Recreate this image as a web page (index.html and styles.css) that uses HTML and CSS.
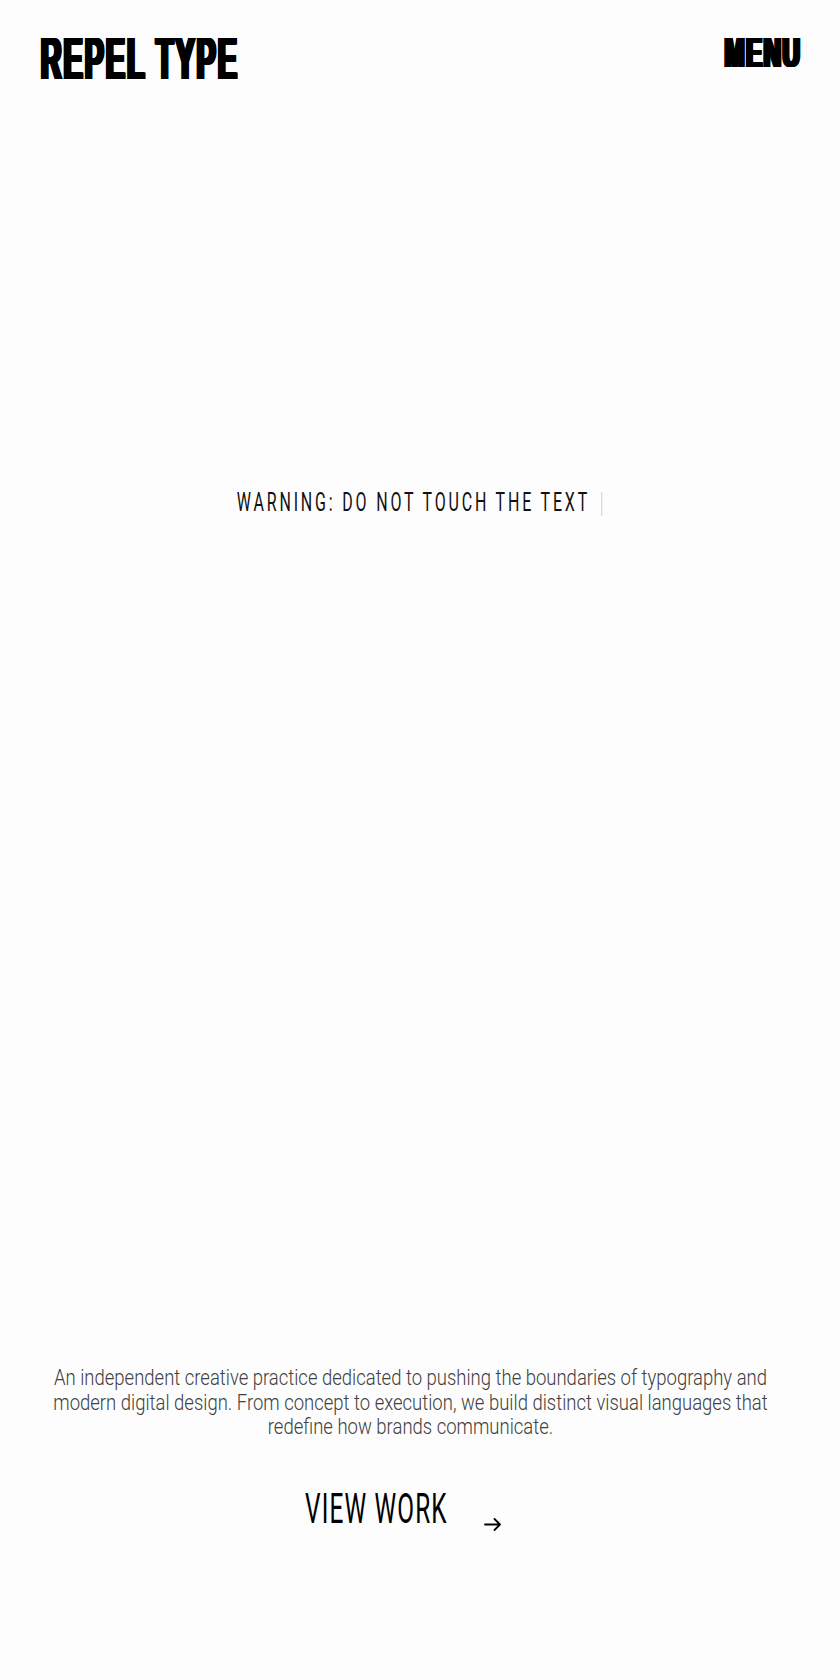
FILE: index.html
```html
<!DOCTYPE html>
<html lang="en">
<head>
<meta charset="utf-8">
<title>Repel Type</title>
<link rel="stylesheet" href="styles.css">
</head>
<body>
<header class="site-header">
  <a class="logo" href="#"><span class="logo-text">REPEL TYPE</span></a>
  <a class="menu" href="#"><span class="menu-text">MENU</span></a>
</header>
<main>
  <section class="hero">
    <p class="warning"><span class="warning-text">WARNING: DO NOT TOUCH THE TEXT<span class="cursor"></span></span></p>
  </section>
  <section class="about">
    <div class="about-row">
      <p class="about-text">An independent creative practice dedicated to pushing the boundaries of typography and modern digital design. From concept to execution, we build distinct visual languages that redefine how brands communicate.</p>
    </div>
    <div class="cta-row">
      <a class="cta" href="#">
        <span class="cta-label"><span class="cta-text">VIEW WORK</span></span>
        <svg class="cta-arrow" width="17" height="13" viewBox="0 0 17 13" fill="none" stroke="#000" stroke-width="1.8" stroke-linecap="round" stroke-linejoin="round"><path d="M1 6.5H16M10.5 1L16 6.5L10.5 12"/></svg>
      </a>
    </div>
  </section>
</main>
</body>
</html>
```

FILE: styles.css
```css
html, body {
  margin: 0;
  padding: 0;
  background: #fdfdfd;
  color: #000;
}
body {
  font-family: Roboto, "Liberation Sans", sans-serif;
  overflow-x: hidden;
}
a { color: inherit; text-decoration: none; }
p { margin: 0; }

.site-header {
  display: flex;
  justify-content: space-between;
  align-items: flex-start;
  padding: 30px 41px 0 39px;
  height: 56px;
}
.logo-text,
.menu-text {
  display: inline-block;
  white-space: nowrap;
  font-family: "Liberation Sans", Arial, sans-serif;
  font-weight: 700;
  color: #000;
  text-shadow: 1px 0 0 #000, 2px 0 0 #000, 3px 0 0 #000, 4px 0 0 #000, 5px 0 0 #000, 6px 0 0 #000, 7px 0 0 #000;
}
.logo-text {
  font-size: 58.6px;
  line-height: 58.6px;
  letter-spacing: 4px;
  transform: scaleX(0.491);
  transform-origin: left top;
}
.menu {
  margin-top: 1.3px;
}
.menu-text {
  font-size: 43.3px;
  line-height: 43.3px;
  letter-spacing: 3px;
  transform: scaleX(0.55);
  transform-origin: right top;
}

.hero {
  height: 833px;
  display: flex;
  align-items: center;
  justify-content: center;
}
.warning {
  display: flex;
  justify-content: center;
}
.warning-text {
  display: inline-block;
  white-space: nowrap;
  font-size: 25px;
  line-height: 25px;
  font-weight: 400;
  letter-spacing: 4.4px;
  color: #111;
  transform: scaleX(0.64);
  transform-origin: center;
}
.cursor {
  display: inline-block;
  width: 1.7px;
  height: 24px;
  background: #d9d9d9;
  margin-left: 17.5px;
  vertical-align: -5px;
}

.about {
  padding-top: 447px;
  overflow: hidden;
}
.about-row {
  display: flex;
  justify-content: center;
  padding-right: 20px;
}
.about-text {
  flex: 0 0 903px;
  width: 903px;
  font-size: 22px;
  line-height: 24.5px;
  font-weight: 300;
  color: #404040;
  text-align: center;
  transform: scaleX(0.84);
  transform-origin: center;
}
.cta-row {
  display: flex;
  justify-content: center;
  padding-right: 34px;
  margin-top: 48px;
}
.cta {
  display: flex;
  align-items: flex-start;
  gap: 37px;
}
.cta-label {
  display: block;
  width: 142px;
  height: 42px;
}
.cta-text {
  display: inline-block;
  white-space: nowrap;
  font-size: 42px;
  line-height: 42px;
  font-weight: 400;
  letter-spacing: 2px;
  color: #000;
  transform: scaleX(0.58);
  transform-origin: left top;
}
.cta-arrow {
  display: block;
  margin-top: 30.5px;
}
```
